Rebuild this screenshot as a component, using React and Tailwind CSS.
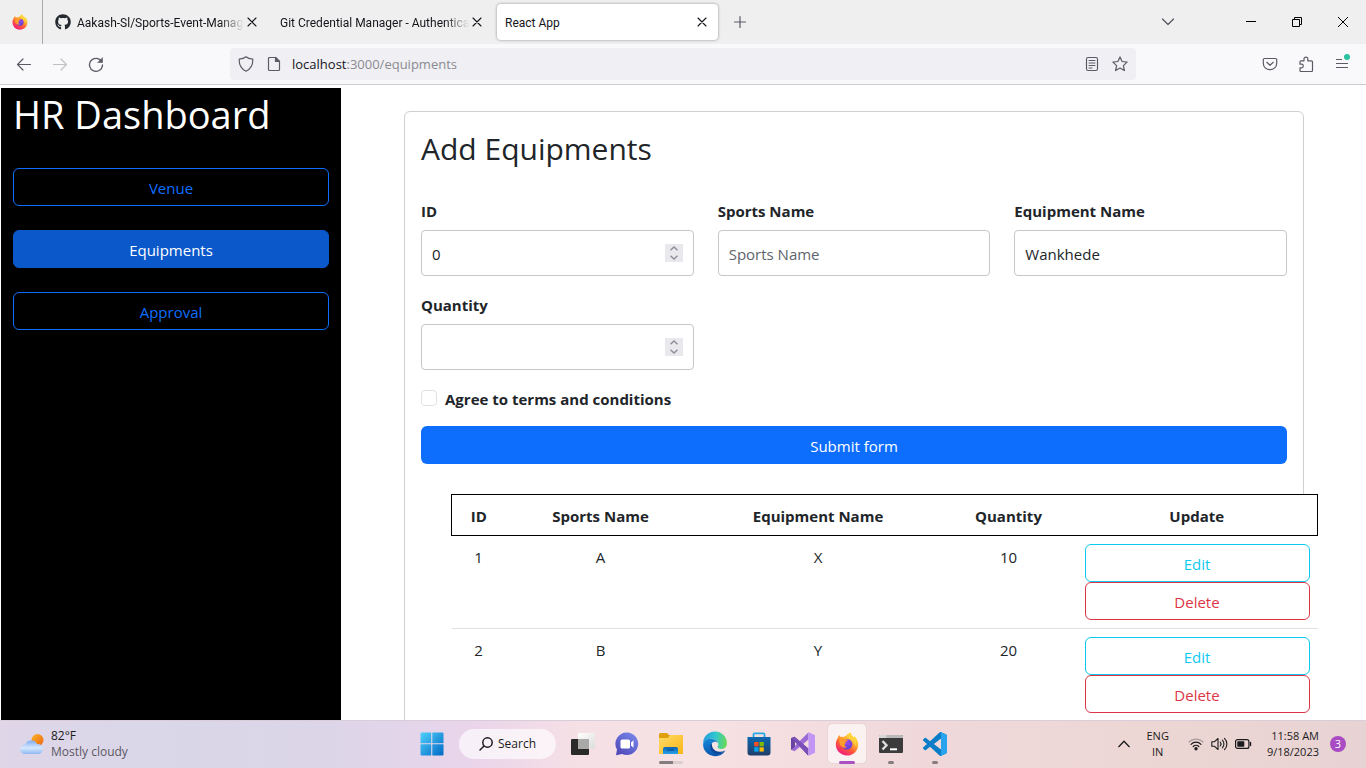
import { useRef } from "react";
import { FaGithub } from "react-icons/fa";

function FirefoxLogo({ size, id }) {
  return (
    <svg width={size} height={size} viewBox="0 0 24 24" aria-hidden="true">
      <defs>
        <linearGradient id={`${id}-body`} x1="0.85" y1="0.05" x2="0.25" y2="1">
          <stop offset="0" stopColor="#fff44f" />
          <stop offset="0.35" stopColor="#ffb02e" />
          <stop offset="0.62" stopColor="#ff5a36" />
          <stop offset="1" stopColor="#f0158a" />
        </linearGradient>
        <radialGradient id={`${id}-globe`} cx="0.5" cy="0.3" r="0.7">
          <stop offset="0" stopColor="#a04be8" />
          <stop offset="1" stopColor="#5b3fd6" />
        </radialGradient>
      </defs>
      <path
        fill={`url(#${id}-body)`}
        d="M15.6 0.6c0.3 2.2 1.7 3.3 2.9 4.6 0.5-0.1 0.8-0.6 0.9-1.2 2.3 2 3.8 5.2 3.8 8.4C23.200 18.700 18.200 23.500 12 23.500S0.800 18.700 0.800 12.600c0-2.700 0.800-5 2.200-6.800 0.100-1.200 0.700-2.100 1.400-2.700 0.200 1 0.600 1.500 1.200 1.900 1-0.200 2.100-0.200 3 0.100 0.700-0.600 1.500-0.900 2.400-1 0.900-1.700 2.600-3.200 4.600-3.500z"
      />
      <circle cx="12" cy="12.300" r="5.300" fill={`url(#${id}-globe)`} />
      <path
        fill="#ff9a2b"
        d="M4 7.200c2-1.500 4.300-1 5.600 0.100 1 0.200 2.400 0.100 3.300 0.400-0.200 1.200-1.500 1.500-2.500 2 0 1 0.600 1.400-0.300 2.200-1.100 1-0.500 2.900 1.900 3.300-2.400 1.200-6.100-0.200-7.200-3z"
      />
      <path
        fill="#ffd23e"
        d="M15.600 0.600c0.300 2.200 1.700 3.300 2.900 4.600 2.600 2.900 3.400 6.200 1.700 9.600-0.200-4-2.100-6.800-5.200-7.800-2.300-0.800-2.900-3.500 0.600-6.400z"
      />
    </svg>
  );
}

function Line({ size = 16, w = 1.2, color = "#5b5b66", children }) {
  return (
    <svg width={size} height={size} viewBox="0 0 16 16" fill="none" stroke={color} strokeWidth={w} strokeLinecap="round" strokeLinejoin="round" aria-hidden="true">
      {children}
    </svg>
  );
}

function CloseX() {
  return (
    <Line size={16} w={1.1} color="#15141a">
      <path d="M4 4l8 8M12 4l-8 8" />
    </Line>
  );
}

function Tab({ title, icon, active }) {
  return (
    <div className="w-[225px] shrink-0 px-0.5 py-1">
      <div className={`flex h-full items-center rounded px-2 ${active ? "bg-white shadow-[0_0_3px_rgba(0,0,0,0.4)]" : ""}`}>
        {icon && <span className="mr-1.5 shrink-0">{icon}</span>}
        <span
          className={`flex-1 whitespace-nowrap pt-0.5 font-[Roboto,sans-serif] text-xs text-[#15141a] ${active ? "" : "[mask-image:linear-gradient(to_left,transparent,black_24px)]"}`}
        >
          {title}
        </span>
        <button type="button" aria-label={`Close ${title}`} className="shrink-0">
          <CloseX />
        </button>
      </div>
    </div>
  );
}

function TabStrip() {
  return (
    <div className="flex h-11 shrink-0 bg-[#efefef]">
      <div className="flex w-[43px] shrink-0 items-center border-r border-[#aaaaaa] pl-3">
        <FirefoxLogo size={16} id="strip" />
      </div>
      <div className="ml-0.5 flex">
        <Tab title="Aakash-Sl/Sports-Event-Manag" icon={<FaGithub size={16} color="#24292f" />} />
        <Tab title="Git Credential Manager - Authentica" />
        <Tab title="React App" active />
      </div>
      <button type="button" aria-label="New tab" className="flex w-10 items-center justify-center">
        <Line size={16}>
          <path d="M8 2.500v11M2.500 8h11" />
        </Line>
      </button>
      <div className="ml-auto flex">
        <button type="button" aria-label="List all tabs" className="mr-10 flex w-10 items-center justify-center">
          <Line size={16} w={1.300}>
            <path d="M2.500 5l5.500 5.500L13.500 5" />
          </Line>
        </button>
        <button type="button" aria-label="Minimize" className="flex w-[46px] items-center justify-center">
          <svg width="10" height="10" aria-hidden="true"><path d="M0 4.500h10" stroke="#000" /></svg>
        </button>
        <button type="button" aria-label="Restore" className="flex w-[46px] items-center justify-center">
          <svg width="10" height="10" fill="none" stroke="#000" aria-hidden="true">
            <path d="M0.500 2.500h7v7h-7zM2.500 2.500v-2h7v7h-2" />
          </svg>
        </button>
        <button type="button" aria-label="Close window" className="flex w-[46px] items-center justify-center">
          <svg width="10" height="10" fill="none" stroke="#000" aria-hidden="true"><path d="M0 0l10 10M10 0L0 10" /></svg>
        </button>
      </div>
    </div>
  );
}

function NavButton({ label, children }) {
  return (
    <button type="button" aria-label={label} className="flex h-full w-9 items-center justify-center">
      {children}
    </button>
  );
}

function NavBar() {
  return (
    <div className="flex h-[41px] shrink-0 items-center border-b border-[#cccccc] bg-[#f9f9fb] px-1.5">
      <NavButton label="Back">
        <Line><path d="M1.500 8.500h13M7 3L1.500 8.500 7 14" /></Line>
      </NavButton>
      <NavButton label="Forward">
        <Line color="#bfbfc4"><path d="M1.500 8.500h13M9 3L14.500 8.500 9 14" /></Line>
      </NavButton>
      <NavButton label="Reload">
        <Line w={1.300}>
          <path d="M13.700 5.700A6.500 6.500 0 1 0 14.500 9" />
          <path d="M14.500 2v4.500H10z" fill="#5b5b66" strokeWidth="0.6" />
        </Line>
      </NavButton>
      <div className="mx-[116px] flex h-8 flex-1 items-center rounded bg-[#f0f0f4] px-2">
        <Line>
          <path d="M8 0.800C10 2.600 12.200 3 14.800 3.200 15 8.500 12.500 13 8 15.200 3.500 13 1 8.500 1.200 3.200 3.800 3 6 2.600 8 0.800z" />
        </Line>
        <span className="ml-3">
          <Line>
            <path d="M9.500 1.500h-6a1 1 0 0 0-1 1v11a1 1 0 0 0 1 1h9a1 1 0 0 0 1-1v-8z" />
            <path d="M9.500 1.500v4h4z" fill="#5b5b66" />
          </Line>
        </span>
        <span className="ml-2.5 flex-1 pt-0.5 text-[13px] text-[#8a8a90]">
          <span className="text-[#15141a]">localhost</span>:3000/equipments
        </span>
        <button type="button" aria-label="Reader view" className="mr-3">
          <Line>
            <rect x="2.500" y="1.500" width="11" height="13" rx="1.500" />
            <path d="M5 4.500h6M5 7h6M5 9.500h6M5 12h3" strokeWidth="1" />
          </Line>
        </button>
        <button type="button" aria-label="Bookmark this page">
          <Line>
            <path d="M8 0.900l2.100 4.600 5 0.600-3.700 3.500 1 5L8 12.100l-4.400 2.500 1-5L0.900 6.100l5-0.600z" />
          </Line>
        </button>
      </div>
      <NavButton label="Save to Pocket">
        <Line>
          <path d="M2.500 2.500h11a1.200 1.200 0 0 1 1.200 1.200v3.800a6.700 6.200 0 0 1-13.400 0V3.700a1.200 1.200 0 0 1 1.200-1.200z" />
          <path d="M4.800 6.300L8 9.300l3.200-3" />
        </Line>
      </NavButton>
      <NavButton label="Extensions">
        <Line>
          <path d="M2 5.800c0-0.600 0.400-1 1-1h3V3a1.900 1.900 0 0 1 3.800 0v1.800h3.700c0.600 0 1 0.400 1 1v8.700c0 0.600-0.400 1-1 1H3c-0.600 0-1-0.400-1-1v-2.700h1.500a1.800 1.800 0 0 0 0-3.600H2z" />
        </Line>
      </NavButton>
      <NavButton label="Open application menu">
        <svg width="20" height="20" viewBox="0 0 20 20" aria-hidden="true">
          <path d="M4 5.500h6M4 9.500h12M4 13.500h12" stroke="#5b5b66" strokeWidth="1.200" />
          <circle cx="15" cy="3" r="3" fill="#2ac3a2" />
        </svg>
      </NavButton>
    </div>
  );
}

const field = "h-[46px] w-full rounded-[4px] border border-[#c6c7c8] bg-white px-2.5 pt-0.5 text-[15px] text-[#212529] placeholder:text-[#5d646b]";
const fieldLabel = "mb-[7px] block font-bold leading-6";

function NumberField({ id, label, value }) {
  const ref = useRef(null);
  return (
    <div>
      <label htmlFor={id} className={fieldLabel}>{label}</label>
      <div className="flex h-[46px] items-center rounded-[4px] border border-[#c6c7c8] bg-white px-2.5">
        <input
          ref={ref}
          id={id}
          type="number"
          defaultValue={value}
          className="min-w-0 flex-1 bg-transparent pt-0.5 outline-none [appearance:textfield] [&::-webkit-inner-spin-button]:appearance-none"
        />
        <span className="flex h-[18px] w-[18px] flex-col bg-[#e9e9ed]">
          <button type="button" aria-label={`Increase ${label}`} className="flex h-[9px] items-center justify-center" onClick={() => ref.current.stepUp()}>
            <svg width="8" height="5" fill="none" stroke="#8f8f9d" strokeWidth="1.500" aria-hidden="true"><path d="M0.500 4.300L4 1l3.500 3.300" /></svg>
          </button>
          <button type="button" aria-label={`Decrease ${label}`} className="flex h-[9px] items-center justify-center" onClick={() => ref.current.stepDown()}>
            <svg width="8" height="5" fill="none" stroke="#8f8f9d" strokeWidth="1.500" aria-hidden="true"><path d="M0.500 0.700L4 4l3.500-3.300" /></svg>
          </button>
        </span>
      </div>
    </div>
  );
}

function TextField({ id, label, ...rest }) {
  return (
    <div>
      <label htmlFor={id} className={fieldLabel}>{label}</label>
      <input id={id} type="text" className={field} {...rest} />
    </div>
  );
}

const rows = [
  { id: 1, sport: "A", equipment: "X", quantity: 10 },
  { id: 2, sport: "B", equipment: "Y", quantity: 20 },
];

function EquipmentTable() {
  const cell = "pb-[7px] pt-[9px]";
  return (
    <div className="relative ml-[30px] mt-[30px] w-full bg-white">
      <table className="w-full table-fixed border-collapse text-center">
        <colgroup>
          <col className="w-[54px]" />
          <col className="w-[190px]" />
          <col className="w-[245px]" />
          <col className="w-[136px]" />
          <col className="w-[241px]" />
        </colgroup>
        <thead className="border border-black">
          <tr>
            {["ID", "Sports Name", "Equipment Name", "Quantity", "Update"].map((h) => (
              <th key={h} className={`${cell} font-bold leading-6`}>{h}</th>
            ))}
          </tr>
        </thead>
        <tbody>
          {rows.map((r) => (
            <tr key={r.id} className="border-b border-[#dee2e6] align-top leading-6">
              <td className={cell}>{r.id}</td>
              <td className={cell}>{r.sport}</td>
              <td className={cell}>{r.equipment}</td>
              <td className={cell}>{r.quantity}</td>
              <td className="p-2">
                <button type="button" className="block h-[38px] w-full rounded-md border border-[#0dcaf0] pt-0.5 text-[#0dcaf0]">Edit</button>
                <button type="button" className="block h-[38px] w-full rounded-md border border-[#dc3545] pt-0.5 text-[#dc3545]">Delete</button>
              </td>
            </tr>
          ))}
        </tbody>
      </table>
    </div>
  );
}

function Dashboard() {
  const outline = "h-[38px] rounded-md border border-[#0d6efd] pt-0.5 text-[#0d6efd]";
  return (
    <div className="flex min-h-0 flex-1 overflow-hidden bg-white pl-px pr-[5px] pt-[3px] text-[15px] text-[#212529]">
      <aside className="w-1/4 shrink-0 bg-black px-3">
        <h1 className="mb-7 whitespace-nowrap text-[38px] leading-[52px] text-white">HR Dashboard</h1>
        <nav className="flex flex-col gap-6">
          <button type="button" className={outline}>Venue</button>
          <button type="button" className="h-[38px] rounded-md border border-[#0a58ca] bg-[#0a58ca] pt-0.5 text-white">Equipments</button>
          <button type="button" className={outline}>Approval</button>
        </nav>
      </aside>
      <main className="min-w-0 flex-1 pl-[63px] pr-[57px] pt-[23px]">
        <section className="min-h-full rounded-md border border-[#cfcfcf] p-4">
          <h2 className="mb-[29px] text-[30px] leading-[42px]">Add Equipments</h2>
          <form onSubmit={(e) => e.preventDefault()}>
            <div className="grid grid-cols-3 gap-x-6 gap-y-[17px]">
              <NumberField id="equipment-id" label="ID" value="0" />
              <TextField id="sports-name" label="Sports Name" placeholder="Sports Name" />
              <TextField id="equipment-name" label="Equipment Name" defaultValue="Wankhede" />
              <NumberField id="quantity" label="Quantity" />
            </div>
            <div className="mt-[17px] flex items-start gap-2">
              <input id="terms" type="checkbox" className="mt-[3px] h-4 w-4 appearance-none rounded-[4px] border border-[#dee2e6] bg-white checked:bg-[#0d6efd]" />
              <label htmlFor="terms" className="font-bold leading-6">Agree to terms and conditions</label>
            </div>
            <button type="submit" className="mt-[15px] h-[38px] w-full rounded-md bg-[#0d6efd] pt-0.5 text-white">Submit form</button>
          </form>
          <EquipmentTable />
        </section>
      </main>
    </div>
  );
}

function TaskIcon({ label, active, running, children }) {
  return (
    <div className="flex w-11 justify-center">
      <button
        type="button"
        aria-label={label}
        className={`relative flex h-[39px] w-[38px] items-center justify-center rounded ${active ? "bg-white/60 shadow-[0_0_1px_rgba(0,0,0,0.25)]" : ""}`}
      >
        {children}
        {running && <span className={`absolute -bottom-px left-1/2 h-[3px] -translate-x-1/2 rounded-full ${running}`} />}
      </button>
    </div>
  );
}

function Taskbar() {
  return (
    <footer className="grid h-12 shrink-0 grid-cols-[1fr_auto_1fr] items-center border-t border-[#d8cdd8] bg-[linear-gradient(90deg,#dfd6e8_0%,#d9d7e8_11%,#dcd5e8_24%,#ead5eb_35%,#f5e0e6_42%,#f6e1e3_52%,#f0d8da_68%,#ecd6d3_86%,#e8d3d4_100%)] pb-0.5 text-[11px] text-[#1b1b1b]">
      <div className="flex items-center gap-[7px] pl-5">
        <svg width="24" height="22" viewBox="0 0 24 22" aria-hidden="true">
          <defs>
            <linearGradient id="sun" x1="0" y1="0" x2="1" y2="1"><stop stopColor="#f9b52b" /><stop offset="1" stopColor="#ee6510" /></linearGradient>
            <linearGradient id="cloud" x1="0" y1="0" x2="0" y2="1"><stop stopColor="#80aef4" /><stop offset="0.55" stopColor="#d6e8fd" /><stop offset="1" stopColor="#8db7f2" /></linearGradient>
          </defs>
          <circle cx="17.500" cy="7" r="6" fill="url(#sun)" />
          <path d="M4.500 21a4.600 4.600 0 0 1 0.500-9.200A6.500 6.200 0 0 1 17 11 5.200 5.100 0 0 1 19 21z" fill="url(#cloud)" />
        </svg>
        <div className="text-xs leading-4">
          <div>82°F</div>
          <div className="text-[#5c5763]">Mostly cloudy</div>
        </div>
      </div>

      <div className="flex h-full items-center">
        <TaskIcon label="Start">
          <svg width="24" height="24" aria-hidden="true">
            <defs><linearGradient id="win" x1="0" y1="0" x2="1" y2="1"><stop stopColor="#4fd0fb" /><stop offset="1" stopColor="#0069c5" /></linearGradient></defs>
            <path d="M0.500 1.500a1 1 0 0 1 1-1h9.700v10.700H0.500zM12.300 0.500H22.500a1 1 0 0 1 1 1v9.700H12.300zM0.500 12.300h10.700v11.200H1.500a1 1 0 0 1-1-1zM12.300 12.300h11.200v10.200a1 1 0 0 1-1 1H12.300z" fill="url(#win)" />
          </svg>
        </TaskIcon>
        <button type="button" className="mx-[5px] flex h-[30px] w-[97px] items-center justify-center gap-1 rounded-full bg-white/65 text-xs">
          <svg width="16" height="16" fill="none" stroke="#1b1b1b" strokeWidth="1.500" strokeLinecap="round" aria-hidden="true">
            <circle cx="9.500" cy="6.500" r="4.700" /><path d="M6 10l-4 4" />
          </svg>
          Search
        </button>
        <TaskIcon label="Task view">
          <svg width="24" height="24" aria-hidden="true">
            <defs><linearGradient id="tv" x1="0" y1="0" x2="1" y2="1"><stop stopColor="#fff" /><stop offset="1" stopColor="#dcdcdc" /></linearGradient></defs>
            <rect x="7" y="1" width="17" height="16" rx="1" fill="url(#tv)" />
            <rect x="0" y="7" width="18" height="16" rx="1" fill="#292a29" />
            <path d="M7 7h11v10H7z" fill="#a9a9a7" />
          </svg>
        </TaskIcon>
        <TaskIcon label="Chat">
          <svg width="24" height="24" aria-hidden="true">
            <defs><linearGradient id="chat" x1="1" y1="0" x2="0.2" y2="1"><stop stopColor="#7d8cf0" /><stop offset="1" stopColor="#4f49b8" /></linearGradient></defs>
            <path d="M12 0.500A11.300 11.300 0 1 1 7 22L1 23.300 2 17.500A11.300 11.300 0 0 1 12 0.500z" fill="url(#chat)" />
            <rect x="5.500" y="7.500" width="9.500" height="9" rx="1.500" fill="#fff" />
            <path d="M16 10.500l2.500-2.300v7.600L16 13.500z" fill="#fff" />
          </svg>
        </TaskIcon>
        <TaskIcon label="File Explorer" running="w-6 bg-[linear-gradient(90deg,#857c80_58%,#dccfd2_58%)]">
          <svg width="24" height="24" aria-hidden="true">
            <defs>
              <linearGradient id="fold" x1="0" y1="0" x2="1" y2="1"><stop stopColor="#ffdc68" /><stop offset="1" stopColor="#f8b517" /></linearGradient>
              <linearGradient id="clip" x1="0" y1="0" x2="0" y2="1"><stop stopColor="#0a63b4" /><stop offset="1" stopColor="#28a1e8" /></linearGradient>
            </defs>
            <path d="M0 2.500A1.500 1.500 0 0 1 1.500 1H8l2 2h13a1 1 0 0 1 1 1v3H0z" fill="#dfa00c" />
            <path d="M0 6h9l2-3h12a1 1 0 0 1 1 1v18H0z" fill="url(#fold)" />
            <path d="M4 22v-5a2 2 0 0 1 2-2h11a2 2 0 0 1 2 2v5z" fill="url(#clip)" />
            <path d="M8 18h7" stroke="#084c8c" strokeWidth="1.200" />
          </svg>
        </TaskIcon>
        <TaskIcon label="Microsoft Edge">
          <svg width="26" height="26" viewBox="0 0 24 24" aria-hidden="true">
            <defs>
              <linearGradient id="edge-a" x1="0" y1="0.3" x2="1" y2="0.4"><stop stopColor="#249bdc" /><stop offset="0.5" stopColor="#30c6d0" /><stop offset="1" stopColor="#67d957" /></linearGradient>
              <linearGradient id="edge-b" x1="0" y1="0" x2="0.3" y2="1"><stop stopColor="#178bdb" /><stop offset="1" stopColor="#0b55ac" /></linearGradient>
            </defs>
            <path d="M1 11.500A11 11 0 0 1 23 11.200c0.200 3-2 5.300-5 5.300-2.500 0-4-0.900-3.700-1.900 0.600-0.900 0.900-1.600 0.700-2.800C14.500 8.600 11 7 7.500 7.200 4.300 7.500 1.800 9 1 11.500z" fill="url(#edge-a)" />
            <path d="M1 12.500C1.300 9 4.500 7 8 7.200c3.500 0.200 6.200 2 6.500 3.600-1-1-3.300-1.500-4.700-0.200-2.800 2.800-0.500 8.200 3.700 9.200 2.800 0.700 5.700 0.100 8-1.500C19.500 21.500 16 23.500 12 23.300 5.500 23 1 18.200 1 12.500z" fill="url(#edge-b)" />
            <path d="M8 12.500c-1.500 4 1.500 8.300 6.200 8.300 3 0 5.600-1.200 7.300-2.700-2.900 1.400-6 1.500-8.700 0.400C10.500 17.300 9 15 9.100 12z" fill="#0a4695" />
          </svg>
        </TaskIcon>
        <TaskIcon label="Microsoft Store">
          <svg width="24" height="24" aria-hidden="true">
            <defs><linearGradient id="store" x1="0" y1="0" x2="0" y2="1"><stop stopColor="#0c68af" /><stop offset="1" stopColor="#203e69" /></linearGradient></defs>
            <path d="M6.500 7V2.500a1.200 1.200 0 0 1 1.200-1.200h8.600a1.200 1.200 0 0 1 1.200 1.200V7" fill="none" stroke="#24a9e8" strokeWidth="1.800" />
            <path d="M0.500 5h23v15.500a3 3 0 0 1-3 3h-17a3 3 0 0 1-3-3z" fill="url(#store)" />
            <path d="M7.200 10h4.300v4.300H7.200z" fill="#f25022" /><path d="M12.500 10h4.300v4.300h-4.300z" fill="#7fba00" />
            <path d="M7.200 15.300h4.300v4.300H7.200z" fill="#00a4ef" /><path d="M12.500 15.300h4.300v4.300h-4.300z" fill="#ffb900" />
          </svg>
        </TaskIcon>
        <TaskIcon label="Visual Studio">
          <svg width="24" height="24" aria-hidden="true">
            <path d="M0 6.200L3.500 4.800 17 16.500v7L3.800 8.500v7L0 17.800z" fill="#52308c" />
            <path d="M0 17.800l3.500 1.400L17.500 7.500V0.300z" fill="#9b6bd6" />
            <path d="M0 6.200L3.500 4.800 17.500 16.500v7z" fill="#7a4fb8" />
            <path d="M0 6.200l3.500 2.500v6.600L0 17.800z" fill="#6a439f" />
            <path d="M17.500 0.200L24 3.200v17.600l-6.500 3z" fill="#c194f5" />
          </svg>
        </TaskIcon>
        <TaskIcon label="Firefox" active running="w-4 bg-[#ab4fc4]">
          <FirefoxLogo size={24} id="task" />
        </TaskIcon>
        <TaskIcon label="Terminal" running="w-1.5 bg-[#857c80]">
          <svg width="24" height="24" aria-hidden="true">
            <rect x="0" y="3" width="24" height="18" rx="1" fill="#3b3b3b" />
            <path d="M0 6V4a1 1 0 0 1 1-1h22a1 1 0 0 1 1 1v2z" fill="#b9b9b9" />
            <path d="M0 6V4a1 1 0 0 1 1-1h6.500v3z" fill="#d6d6d6" />
            <path d="M3.500 9l4 4.300-4 4.200" fill="none" stroke="#dedede" strokeWidth="2.400" />
            <path d="M11 17.300h7" stroke="#fff" strokeWidth="2" />
          </svg>
        </TaskIcon>
        <TaskIcon label="Visual Studio Code" running="w-1.5 bg-[#857c80]">
          <svg width="24" height="24" aria-hidden="true">
            <path
              fill="#0b7dc7"
              fillRule="evenodd"
              d="M23.150 2.587L18.210.210a1.494 1.494 0 0 0-1.705.290l-9.460 8.630-4.120-3.128a.999.999 0 0 0-1.276.057L.327 7.261A1 1 0 0 0 .326 8.740L3.899 12 .326 15.260a1 1 0 0 0 .001 1.479L1.650 17.940a.999.999 0 0 0 1.276.057l4.120-3.128 9.460 8.630a1.492 1.492 0 0 0 1.704.290l4.942-2.377A1.500 1.500 0 0 0 24 20.060V3.939a1.500 1.500 0 0 0-.850-1.352zm-5.146 14.861L10.826 12l7.178-5.448v10.896z"
            />
            <path d="M18 0.200l5.150 2.387A1.500 1.500 0 0 1 24 3.939V20.060a1.500 1.500 0 0 1-.850 1.350L18 23.800z" fill="#2aa3ee" />
          </svg>
        </TaskIcon>
      </div>

      <div className="flex items-center justify-end pr-5 leading-4">
        <button type="button" aria-label="Show hidden icons" className="mr-4">
          <svg width="12" height="8" fill="none" stroke="#1b1b1b" strokeWidth="1.300" aria-hidden="true"><path d="M0.500 7L6 1.300 11.500 7" /></svg>
        </button>
        <div className="mr-[19px] text-center">
          <div>ENG</div>
          <div>IN</div>
        </div>
        <div className="mr-[15px] flex items-center gap-[7px]">
          <svg width="16" height="14" fill="none" stroke="#1b1b1b" strokeWidth="1.200" strokeLinecap="round" aria-hidden="true">
            <path d="M1 5a10 10 0 0 1 14 0" stroke="#a79b9b" />
            <path d="M3 7.300a7 7 0 0 1 10 0M5.200 9.500a4 4 0 0 1 5.600 0" />
            <circle cx="8" cy="11.700" r="1.100" fill="#1b1b1b" />
          </svg>
          <svg width="17" height="14" fill="none" stroke="#1b1b1b" strokeWidth="1.100" strokeLinejoin="round" strokeLinecap="round" aria-hidden="true">
            <path d="M0.800 4.800h2.500L7 1.500v11L3.300 9.200H0.800z" />
            <path d="M9.200 5a3 3 0 0 1 0 4M11.400 3.200a5.500 5.500 0 0 1 0 7.600M13.500 1.300a8 8 0 0 1 0 11.400" />
          </svg>
          <svg width="17" height="12" fill="none" aria-hidden="true">
            <rect x="0.600" y="1.600" width="13.300" height="8.800" rx="2" stroke="#1b1b1b" strokeWidth="1.200" />
            <rect x="2.300" y="3.300" width="7" height="5.400" rx="0.600" fill="#1b1b1b" />
            <path d="M15.500 4.500v3" stroke="#1b1b1b" strokeWidth="1.400" strokeLinecap="round" />
          </svg>
        </div>
        <div className="mr-[11px] text-right">
          <div>11:58 AM</div>
          <div>9/18/2023</div>
        </div>
        <span className="flex h-4 w-4 items-center justify-center rounded-full bg-[#a94bc2] text-[11px] text-white">3</span>
      </div>
    </footer>
  );
}

export default function App() {
  return (
    <div className="flex h-screen flex-col overflow-hidden font-['Open_Sans','Noto_Sans',sans-serif]">
      <TabStrip />
      <NavBar />
      <Dashboard />
      <Taskbar />
    </div>
  );
}
